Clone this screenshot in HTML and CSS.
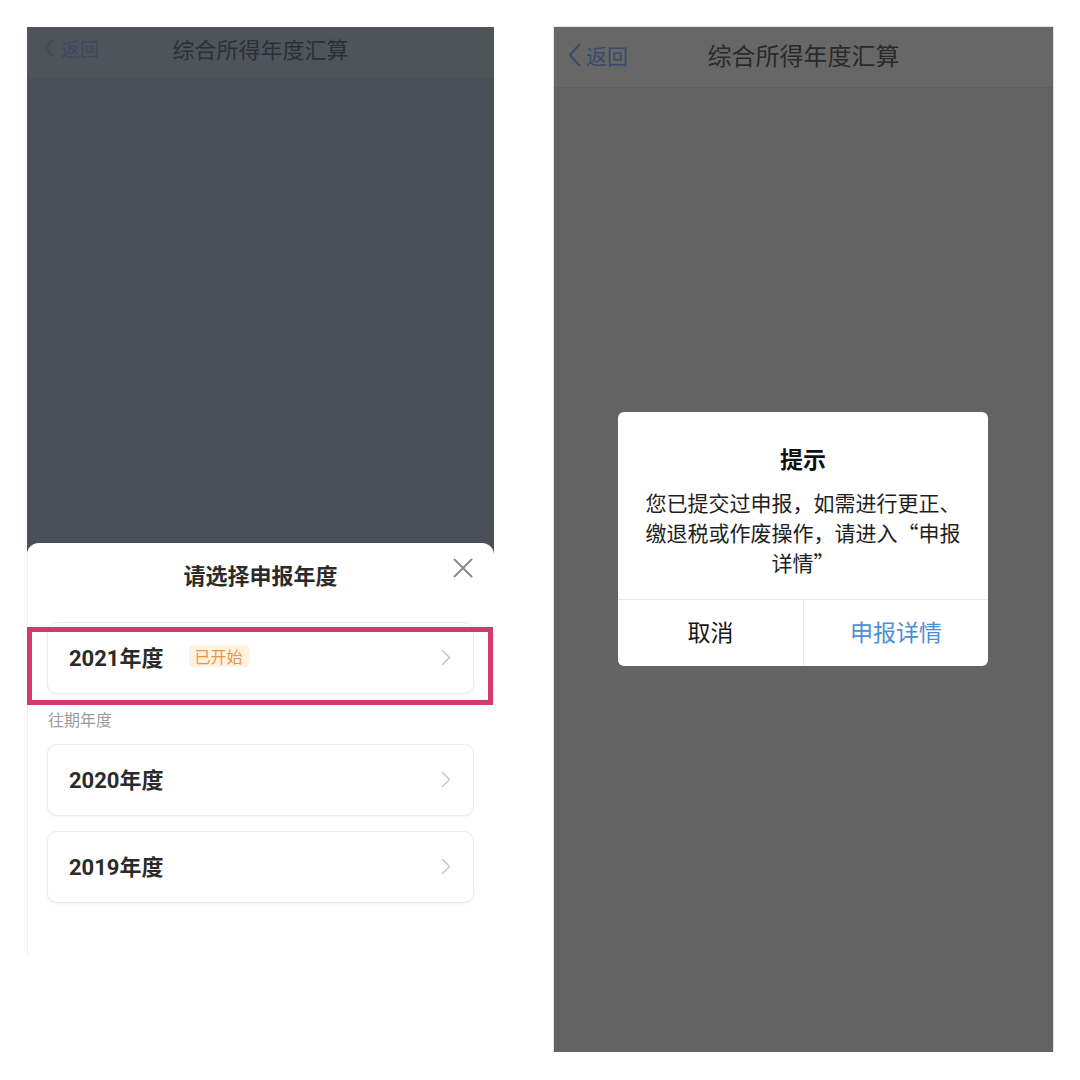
FILE: index.html
```html
<!DOCTYPE html>
<html lang="zh-CN">
<head>
<meta charset="utf-8">
<title>综合所得年度汇算</title>
<link rel="stylesheet" href="styles.css">
</head>
<body>
<div class="stage">
  <div class="phone phone-left">
    <div class="nav nav-left">
      <span class="back back-left">
        <svg class="back-icon" width="10" height="18" viewBox="0 0 10 18"><polyline points="8.5,1 1.5,9 8.5,17" fill="none" stroke="currentColor" stroke-width="1.8" stroke-linecap="round" stroke-linejoin="round"/></svg>返回</span>
      <span class="nav-title nav-title-left">综合所得年度汇算</span>
      <span></span>
    </div>
    <div class="mask"></div>
    <div class="sheet">
      <div class="sheet-head">
        <span></span>
        <span class="sheet-title">请选择申报年度</span>
        <svg class="close" width="20" height="20" viewBox="0 0 20 20"><path d="M1.5 1.5 L18.5 18.5 M18.5 1.5 L1.5 18.5" stroke="#8a8a8a" stroke-width="2" stroke-linecap="round"/></svg>
      </div>
      <div class="card card-first">
        <span class="year">2021年度</span>
        <span class="badge">已开始</span>
        <svg class="chev" width="10" height="17" viewBox="0 0 10 17"><polyline points="1.5,1.5 8.5,8.5 1.5,15.5" fill="none" stroke="#c6c6c6" stroke-width="1.5" stroke-linecap="round" stroke-linejoin="round"/></svg>
      </div>
      <div class="label">往期年度</div>
      <div class="card">
        <span class="year">2020年度</span>
        <svg class="chev" width="10" height="17" viewBox="0 0 10 17"><polyline points="1.5,1.5 8.5,8.5 1.5,15.5" fill="none" stroke="#c6c6c6" stroke-width="1.5" stroke-linecap="round" stroke-linejoin="round"/></svg>
      </div>
      <div class="card card-gap">
        <span class="year">2019年度</span>
        <svg class="chev" width="10" height="17" viewBox="0 0 10 17"><polyline points="1.5,1.5 8.5,8.5 1.5,15.5" fill="none" stroke="#c6c6c6" stroke-width="1.5" stroke-linecap="round" stroke-linejoin="round"/></svg>
      </div>
    </div>
    <div class="highlight"></div>
  </div>

  <div class="phone phone-right">
    <div class="nav nav-right">
      <span class="back back-right">
        <svg class="back-icon" width="13" height="24" viewBox="0 0 13 24"><polyline points="11.5,1.5 1.8,12 11.5,22.5" fill="none" stroke="currentColor" stroke-width="2" stroke-linecap="round" stroke-linejoin="round"/></svg>返回</span>
      <span class="nav-title nav-title-right">综合所得年度汇算</span>
      <span></span>
    </div>
    <div class="dialog">
      <div class="dlg-body">
        <div class="dlg-title">提示</div>
        <div class="dlg-text">您已提交过申报，如需进行更正、<br>缴退税或作废操作，请进入“申报<br>详情”</div>
      </div>
      <div class="dlg-actions">
        <div class="dlg-btn">取消</div>
        <div class="dlg-btn dlg-btn-primary">申报详情</div>
      </div>
    </div>
  </div>
</div>
</body>
</html>
```

FILE: styles.css
```css
html, body {
  margin: 0;
  padding: 0;
  background: #ffffff;
}

body {
  font-family: "Noto Sans CJK SC", "Noto Sans", sans-serif;
}

.stage {
  display: flex;
  align-items: flex-start;
  gap: 60px;
  padding: 27px 0 0 27px;
}

.phone {
  position: relative;
  box-sizing: border-box;
}

/* ---------- left phone ---------- */
.phone-left {
  width: 467px;
  height: 928px;
  display: flex;
  flex-direction: column;
  background: #4b5058;
}

.nav {
  display: grid;
  grid-template-columns: 1fr auto 1fr;
  align-items: center;
  box-sizing: border-box;
}

.nav-left {
  height: 51px;
  background: #4f545b;
  padding-bottom: 9px;
}

.back {
  display: flex;
  align-items: center;
}

.back-left {
  color: #3b4862;
  font-size: 19px;
  padding-left: 17px;
}

.back-left .back-icon {
  margin-right: 7px;
}

.nav-title-left {
  font-size: 22px;
  color: #2c3036;
  line-height: 30px;
}

.mask {
  flex: 1;
}

.sheet {
  height: 412px;
  background: #ffffff;
  border-radius: 12px 12px 0 0;
  padding: 16px 20px 0;
  box-sizing: border-box;
  box-shadow: inset 1px 0 0 #f1f1f1;
}

.sheet-head {
  display: grid;
  grid-template-columns: 1fr auto 1fr;
  height: 32px;
}

.sheet-title {
  font-size: 22px;
  font-weight: 700;
  line-height: 30px;
  color: #2b2b2b;
}

.close {
  justify-self: end;
  margin-top: -1px;
  margin-right: 1px;
}

.card {
  height: 72px;
  box-sizing: border-box;
  display: flex;
  align-items: center;
  padding: 0 22px 4px 21px;
  border: 1px solid #ebebeb;
  border-radius: 10px;
  background: #ffffff;
  box-shadow: 0 1px 3px rgba(0, 0, 0, 0.05);
}

.card .chev {
  margin-top: 2px;
}

.card-first {
  margin-top: 31px;
}

.card-gap {
  margin-top: 15px;
}

.year {
  font-family: "Roboto", "Noto Sans CJK SC", sans-serif;
  font-size: 22px;
  font-weight: 700;
  color: #2a2a2a;
}

.badge {
  margin-left: 25px;
  background: #fff3df;
  color: #e8954a;
  font-size: 16px;
  line-height: 22px;
  padding: 0 6px;
  border-radius: 3px;
}

.chev {
  margin-left: auto;
}

.label {
  margin: 15px 0 15px 1px;
  font-size: 16px;
  line-height: 20px;
  color: #9b9b9b;
}

.highlight {
  position: absolute;
  left: 0;
  top: 600px;
  width: 466px;
  height: 78px;
  border: 5px solid #d33b6f;
  box-sizing: border-box;
}

/* ---------- right phone ---------- */
.phone-right {
  width: 499px;
  height: 1025px;
  background: #636363;
  outline: 1px solid #e2e2e2;
}

.nav-right {
  height: 61px;
  background: #676767;
  border-bottom: 1px solid #5f5f5f;
  padding-bottom: 4px;
}

.back-right {
  color: #3a4a6c;
  font-size: 21px;
  padding-left: 14px;
}

.back-right .back-icon {
  margin-right: 5px;
}

.nav-title-right {
  font-size: 24px;
  color: #2a2a2a;
  line-height: 32px;
}

.dialog {
  position: absolute;
  left: 64px;
  top: 385px;
  width: 370px;
  background: #ffffff;
  border-radius: 6px;
  overflow: hidden;
}

.dlg-body {
  padding: 31px 16px 22px;
  text-align: center;
}

.dlg-title {
  font-size: 23px;
  font-weight: 700;
  line-height: 30px;
  color: #111111;
}

.dlg-text {
  margin-top: 14px;
  font-size: 21px;
  line-height: 30px;
  color: #1e1e1e;
}

.dlg-actions {
  display: grid;
  grid-template-columns: 1fr 1fr;
  height: 67px;
  border-top: 1px solid #e8e8e8;
  box-sizing: border-box;
}

.dlg-btn {
  display: flex;
  align-items: center;
  justify-content: center;
  font-size: 23px;
  color: #151515;
  padding-bottom: 4px;
}

.dlg-btn-primary {
  color: #4a8fd8;
  border-left: 1px solid #e8e8e8;
}
```
